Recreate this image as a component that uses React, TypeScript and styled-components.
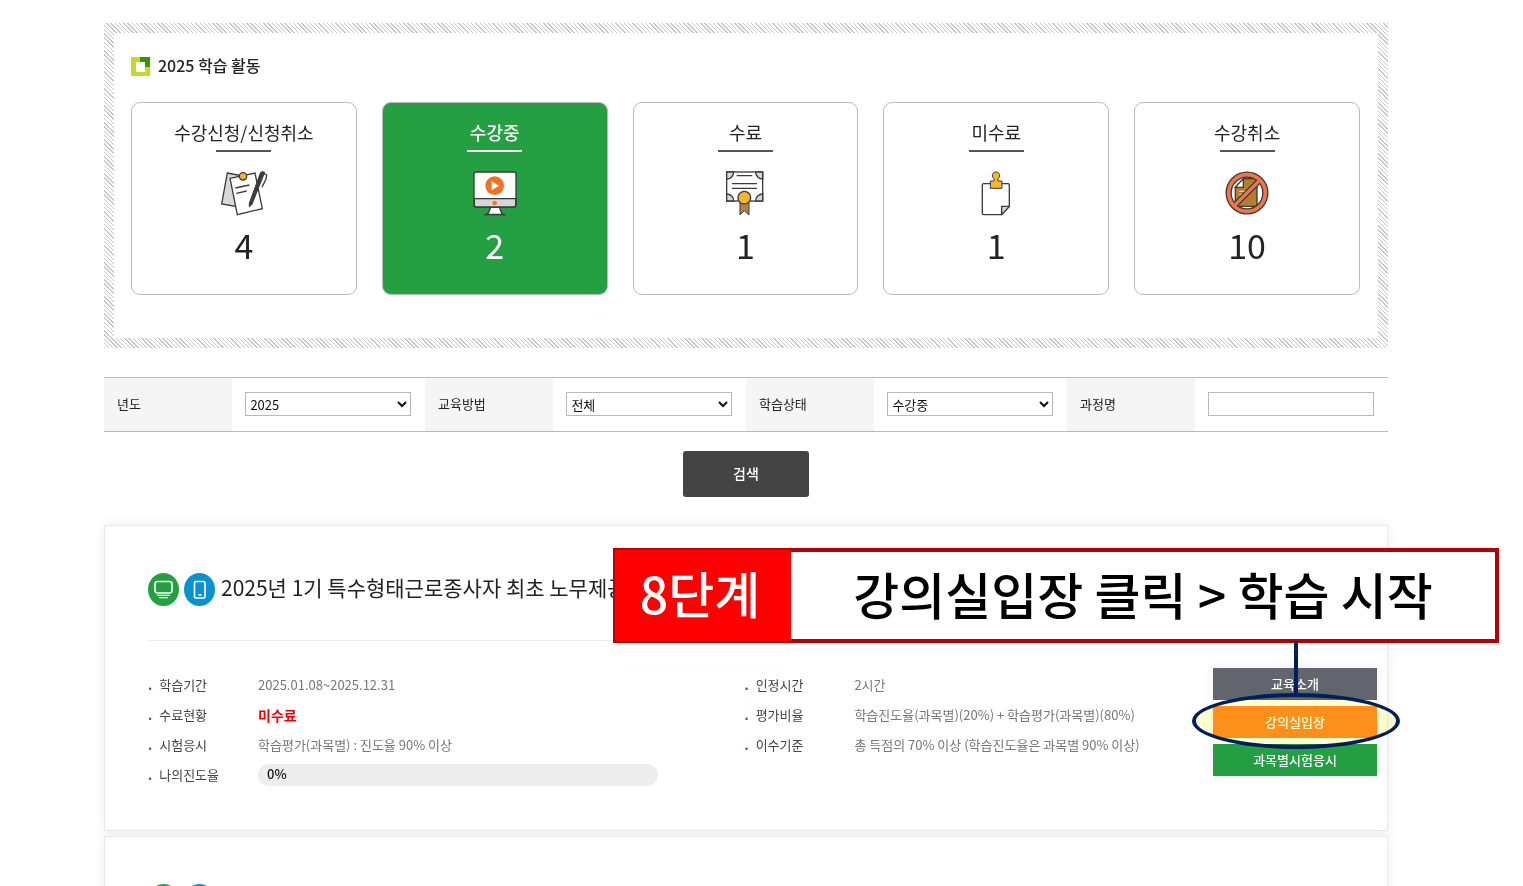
import React from "react";
import styled, { createGlobalStyle, css } from "styled-components";

const GlobalStyle = createGlobalStyle`
  *, *::before, *::after { box-sizing: border-box; }
  body {
    margin: 0;
    background: #fff;
    color: #222;
    font-family: "Noto Sans CJK KR", "Noto Sans", sans-serif;
    font-size: 13px;
    line-height: 20px;
  }
  button, input, select { font-family: inherit; font-size: inherit; }
  h1, h2, dl, dt, dd { margin: 0; font-weight: inherit; }
`;

const Page = styled.main`
  height: 100vh;
  overflow: hidden;
  padding: 23px 135px 0 104px;
`;

const HatchedFrame = styled.section`
  padding: 10px;
  background: repeating-linear-gradient(45deg, #c8c8c8 0 1px, #fff 1px 3px);
`;

const ActivityPanel = styled.div`
  padding: 20px 18px 43px 17px;
  background: #fff;
`;

const PanelHeading = styled.h1`
  display: flex;
  align-items: center;
  gap: 8px;
  height: 26px;
  font-size: 16px;
  font-weight: 500;
  line-height: 24px;
`;

const HeadingText = styled.span`
  padding-bottom: 2px;
`;

const StatusGrid = styled.div`
  display: grid;
  grid-template-columns: repeat(5, minmax(0, 1fr));
  gap: 25px;
  margin-top: 23px;
`;

const StatusCard = styled.button<{ $active?: boolean }>`
  display: flex;
  flex-direction: column;
  align-items: center;
  height: 193px;
  padding: 17px 0 0;
  border: 1px solid #bbb;
  border-radius: 9px;
  background: ${(p) => (p.$active ? "#249f41" : "#fff")};
  color: ${(p) => (p.$active ? "#fff" : "#222")};
  cursor: pointer;
`;

const StatusName = styled.span<{ $active?: boolean }>`
  font-size: 18px;
  font-weight: ${(p) => (p.$active ? 500 : 400)};
  line-height: 24px;
`;

const StatusRule = styled.span<{ $active?: boolean }>`
  width: 55px;
  height: 2px;
  margin: 6px 0 18px;
  background: ${(p) => (p.$active ? "#fff" : "#555")};
`;

const StatusCount = styled.span`
  margin-top: 9px;
  font-size: 34px;
  line-height: 40px;
`;

const StatusIcon = styled.svg`
  width: 46px;
  height: 46px;
  overflow: visible;
`;

const SearchForm = styled.form`
  display: flex;
  flex-direction: column;
  align-items: center;
  margin-top: 29px;
`;

const FilterRow = styled.div`
  display: grid;
  grid-template-columns: repeat(4, minmax(0, 2fr) minmax(0, 3fr));
  width: 100%;
  height: 55px;
  border-top: 1px solid #b9b9b9;
  border-bottom: 1px solid #b9b9b9;
`;

const FilterLabel = styled.label`
  display: flex;
  align-items: center;
  padding: 0 0 2px 13px;
  background: #f5f5f5;
`;

const FilterCell = styled.div`
  display: flex;
  align-items: center;
  padding: 0 14px 1px 13px;
`;

const field = css`
  width: 100%;
  height: 24px;
  border: 1px solid #b9b9b9;
  border-radius: 0;
  background-color: #fff;
  color: #111;
`;

const FilterSelect = styled.select`
  ${field}
  padding: 0;
`;

const FilterInput = styled.input`
  ${field}
  padding: 0 4px;
`;

const SearchButton = styled.button`
  width: 126px;
  height: 46px;
  margin-top: 19px;
  padding: 0 0 3px;
  border: 0;
  border-radius: 3px;
  background: #444;
  color: #fff;
  font-size: 14px;
  font-weight: 500;
  cursor: pointer;
`;

const CourseList = styled.div`
  display: flex;
  flex-direction: column;
  gap: 5px;
  margin-top: 28px;
`;

const CourseCard = styled.article`
  position: relative;
  min-height: 306px;
  padding: 47px 10px 0 43px;
  border: 1px solid #e9e9e9;
  background: #fff;
  box-shadow: 0 0 12px rgba(0, 0, 0, 0.07);
`;

const CourseHeader = styled.header`
  display: flex;
  align-items: flex-start;
  gap: 5px;
  height: 68px;
  border-bottom: 1px solid #ededed;
`;

const DeviceIcon = styled.svg`
  flex: none;
  width: 31px;
  height: 33px;
`;

const CourseTitle = styled.h2`
  padding-left: 1px;
  font-size: 21px;
  line-height: 28px;
`;

const CourseBody = styled.div`
  display: flex;
  align-items: flex-start;
  margin-top: 27px;
`;

const InfoColumns = styled.div`
  flex: 1;
  display: grid;
  grid-template-columns: minmax(0, 56fr) minmax(0, 44fr);
  align-items: start;
  margin-top: 2px;
`;

const InfoList = styled.dl`
  display: grid;
  grid-template-columns: 110px minmax(0, 1fr);
  grid-auto-rows: 30px;
  align-items: center;
`;

const InfoTerm = styled.dt`
  display: flex;
  gap: 7px;
  color: #444;
  &::before {
    content: ".";
    color: #1c7a3a;
    font-weight: 700;
  }
`;

const InfoValue = styled.dd<{ $alert?: boolean }>`
  color: ${(p) => (p.$alert ? "#f00000" : "#777")};
  font-size: ${(p) => (p.$alert ? "14px" : "13px")};
  font-weight: ${(p) => (p.$alert ? 700 : 400)};
`;

const ProgressTrack = styled.div`
  position: relative;
  max-width: 400px;
  height: 22px;
  overflow: hidden;
  border-radius: 11px;
  background: #ededed;
`;

const ProgressFill = styled.div`
  height: 100%;
  background: #249f41;
`;

const ProgressText = styled.span`
  position: absolute;
  inset: 0 auto auto 9px;
  color: #111;
  font-weight: 500;
`;

const Actions = styled.div`
  display: flex;
  flex-direction: column;
  gap: 6px;
  width: 164px;
  box-shadow: 0 0 12px rgba(0, 0, 0, 0.08);
`;

const ActionSlot = styled.div`
  position: relative;
`;

const ActionButton = styled.button<{ $tone: string }>`
  display: block;
  width: 100%;
  height: 32px;
  padding: 0 0 2px;
  border: 0;
  background: ${(p) => p.$tone};
  color: #fff;
  font-weight: 500;
  cursor: pointer;
`;

const ringShape = css`
  position: absolute;
  inset: -13px -23px -11px -21px;
  border-radius: 50%;
  pointer-events: none;
`;

const RingTint = styled.div`
  ${ringShape}
  background: #ffffd2;
  mix-blend-mode: multiply;
`;

const RingOutline = styled.div`
  ${ringShape}
  border: 4px solid #001f5f;
`;

const Connector = styled.div`
  position: absolute;
  left: 50%;
  bottom: 43px;
  width: 4px;
  height: 54px;
  margin-left: -1px;
  background: #001f5f;
  pointer-events: none;
`;

const Callout = styled.aside`
  position: absolute;
  top: 22px;
  left: 508px;
  right: -112px;
  display: flex;
  height: 95px;
  border: 4px solid #b60005;
  background: #fff;
  color: #000;
  font-size: 50px;
  line-height: 82px;
  text-align: center;
  white-space: nowrap;
`;

const CalloutStep = styled.strong`
  width: 176px;
  margin: -2px 0 -2px -2px;
  padding-right: 6px;
  background: #f00;
  color: #fff;
  font-weight: 500;
  line-height: 84px;
`;

const CalloutText = styled.span`
  flex: 1;
  font-weight: 500;
`;

const ink = "#3d3a39";

const ApplyIcon = () => (
  <StatusIcon viewBox="376 466 138 138" fill="none" stroke={ink} strokeWidth="4" aria-hidden="true">
    <path d="M395 475l52 10-18 92-51-9z" fill="#d9d9d9" />
    <path d="M403 491l75-16 22 107-75 18z" fill="#fff" />
    <path d="M419 520l42-9M422 536l31-7" />
    <circle cx="442" cy="485" r="11" fill="#f9b52b" />
    <path d="M495 473q7-4 12 0l-38 96-8 8v-12z" fill={ink} strokeWidth="3" />
    <path d="M504 476l9 5-2 12-12 25" strokeWidth="4" />
  </StatusIcon>
);

const LearningIcon = () => (
  <StatusIcon viewBox="306 226 136 138" fill="none" stroke={ink} strokeWidth="4" aria-hidden="true">
    <path d="M360 337h28q1 14 10 22h-48q9-8 10-22z" fill="#fff" />
    <path d="M341 360h65" />
    <rect x="311" y="232" width="126" height="105" rx="6" fill="#fff" />
    <path d="M312 312h124v19q0 6-6 6H318q-6 0-6-6z" fill="#d6d6d6" />
    <circle cx="373" cy="273" r="28" fill="#f17224" stroke="none" />
    <path d="M364 260v27l22-14z" fill="#fff" stroke="none" />
    <circle cx="373" cy="325" r="7" fill="#f17224" stroke="none" />
  </StatusIcon>
);

const CompleteIcon = () => (
  <StatusIcon viewBox="98 180 138 138" fill="none" stroke={ink} strokeWidth="4" aria-hidden="true">
    <path d="M152 276v39l13-13 14 13v-39z" fill="#b5804a" strokeWidth="3" />
    <rect x="112" y="186" width="108" height="87" fill="#fff" />
    <path d="M112 186h21a21 21 0 0 1-21 21zM220 186h-21a21 21 0 0 0 21 21zM112 273h21a21 21 0 0 0-21-21zM220 273h-21a21 21 0 0 1 21-21z" fill="#d6d6d6" />
    <path d="M142 197h47M128 221h75M128 235h75" />
    <circle cx="165" cy="263" r="19" fill="#f9b52b" />
  </StatusIcon>
);

const IncompleteIcon = () => (
  <StatusIcon viewBox="101 180 138 138" fill="none" stroke={ink} strokeWidth="4" strokeLinejoin="round" aria-hidden="true">
    <path d="M133 221h73q4 0 4 4v64l-23 25h-54q-4 0-4-4v-85q0-4 4-4z" fill="#fff" />
    <path d="M210 289h-23v25z" fill="#d6d6d6" />
    <path d="M153 213h11v-7a11 11 0 1 1 12 0v7h12v22h-35z" fill="#f9b52b" strokeWidth="3" />
  </StatusIcon>
);

const CancelIcon = () => (
  <StatusIcon viewBox="101 182 138 138" fill="none" stroke={ink} strokeWidth="4" aria-hidden="true">
    <circle cx="170" cy="251" r="54" fill="#fff" stroke="none" />
    <path d="M159 208h41v83h-65v-57z" fill="#b57d32" />
    <path d="M159 208v26h-24z" fill="#fff" />
    <path d="M147 246h21M147 256h18M147 267h12" stroke="#f4e4cc" strokeWidth="3" />
    <circle cx="170" cy="251" r="55" stroke={ink} strokeWidth="19" />
    <path d="M209 212l-78 78" stroke={ink} strokeWidth="18" />
    <circle cx="170" cy="251" r="55" stroke="#f1744c" strokeWidth="11" />
    <path d="M210 211l-80 80" stroke="#f1744c" strokeWidth="10" />
  </StatusIcon>
);

const HeadingMark = () => (
  <svg width="19" height="19" viewBox="0 0 19 19" aria-hidden="true">
    <path d="M0 0h19v19H0z" fill="#c3d92c" />
    <path d="M9 0h10v10H9z" fill="#369600" />
    <path d="M5 5h9v10H5z" fill="#fff" />
  </svg>
);

const DesktopBadge = () => (
  <DeviceIcon viewBox="0 0 31 33" preserveAspectRatio="none" role="img" aria-label="PC">
    <ellipse cx="15.5" cy="16.5" rx="15.5" ry="16.5" fill="#249f41" />
    <g fill="none" stroke="#fff" strokeWidth="1.6">
      <rect x="7" y="8.5" width="17" height="11.5" rx="2.5" />
      <path d="M9 22.4h13M11 24.6h9" strokeWidth="1.3" />
    </g>
  </DeviceIcon>
);

const MobileBadge = () => (
  <DeviceIcon viewBox="0 0 31 33" preserveAspectRatio="none" role="img" aria-label="Mobile">
    <ellipse cx="15.5" cy="16.5" rx="15.5" ry="16.5" fill="#0b91cc" />
    <rect x="10.5" y="8.5" width="10.5" height="16.5" rx="1.5" fill="none" stroke="#fff" strokeWidth="1.6" />
    <path d="M14.5 21.8h3" stroke="#fff" strokeWidth="1.6" />
  </DeviceIcon>
);

const statuses = [
  { name: "수강신청/신청취소", count: 4, Icon: ApplyIcon },
  { name: "수강중", count: 2, Icon: LearningIcon, active: true },
  { name: "수료", count: 1, Icon: CompleteIcon },
  { name: "미수료", count: 1, Icon: IncompleteIcon },
  { name: "수강취소", count: 10, Icon: CancelIcon },
];

const filters = [
  { id: "year", label: "년도", value: "2025" },
  { id: "method", label: "교육방법", value: "전체" },
  { id: "state", label: "학습상태", value: "수강중" },
];

const progress = 0;

export default function App() {
  return (
    <Page>
      <GlobalStyle />
      <HatchedFrame>
        <ActivityPanel>
          <PanelHeading>
            <HeadingMark />
            <HeadingText>2025 학습 활동</HeadingText>
          </PanelHeading>
          <StatusGrid>
            {statuses.map(({ name, count, Icon, active }) => (
              <StatusCard key={name} type="button" $active={active}>
                <StatusName $active={active}>{name}</StatusName>
                <StatusRule $active={active} />
                <Icon />
                <StatusCount>{count}</StatusCount>
              </StatusCard>
            ))}
          </StatusGrid>
        </ActivityPanel>
      </HatchedFrame>

      <SearchForm onSubmit={(e) => e.preventDefault()}>
        <FilterRow>
          {filters.map((f) => (
            <React.Fragment key={f.id}>
              <FilterLabel htmlFor={f.id}>{f.label}</FilterLabel>
              <FilterCell>
                <FilterSelect id={f.id} defaultValue={f.value}>
                  <option>{f.value}</option>
                </FilterSelect>
              </FilterCell>
            </React.Fragment>
          ))}
          <FilterLabel htmlFor="course">과정명</FilterLabel>
          <FilterCell>
            <FilterInput id="course" type="text" />
          </FilterCell>
        </FilterRow>
        <SearchButton type="submit">검색</SearchButton>
      </SearchForm>

      <CourseList>
        <CourseCard>
          <CourseHeader>
            <DesktopBadge />
            <MobileBadge />
            <CourseTitle>2025년 1기 특수형태근로종사자 최초 노무제공</CourseTitle>
          </CourseHeader>
          <Callout>
            <CalloutStep>8단계</CalloutStep>
            <CalloutText>강의실입장 클릭 &gt; 학습 시작</CalloutText>
          </Callout>
          <CourseBody>
            <InfoColumns>
              <InfoList>
                <InfoTerm>학습기간</InfoTerm>
                <InfoValue>2025.01.08~2025.12.31</InfoValue>
                <InfoTerm>수료현황</InfoTerm>
                <InfoValue $alert>미수료</InfoValue>
                <InfoTerm>시험응시</InfoTerm>
                <InfoValue>학습평가(과목별) : 진도율 90% 이상</InfoValue>
                <InfoTerm>나의진도율</InfoTerm>
                <InfoValue>
                  <ProgressTrack>
                    <ProgressFill style={{ width: `${progress}%` }} />
                    <ProgressText>{progress}%</ProgressText>
                  </ProgressTrack>
                </InfoValue>
              </InfoList>
              <InfoList>
                <InfoTerm>인정시간</InfoTerm>
                <InfoValue>2시간</InfoValue>
                <InfoTerm>평가비율</InfoTerm>
                <InfoValue>학습진도율(과목별)(20%) + 학습평가(과목별)(80%)</InfoValue>
                <InfoTerm>이수기준</InfoTerm>
                <InfoValue>총 득점의 70% 이상 (학습진도율은 과목별 90% 이상)</InfoValue>
              </InfoList>
            </InfoColumns>
            <Actions>
              <ActionButton type="button" $tone="#62656d">교육소개</ActionButton>
              <ActionSlot>
                <ActionButton type="button" $tone="#ff8f20">강의실입장</ActionButton>
                <RingTint />
                <RingOutline />
                <Connector />
              </ActionSlot>
              <ActionButton type="button" $tone="#249f41">과목별시험응시</ActionButton>
            </Actions>
          </CourseBody>
        </CourseCard>
        <CourseCard>
          <CourseHeader>
            <DesktopBadge />
            <MobileBadge />
          </CourseHeader>
        </CourseCard>
      </CourseList>
    </Page>
  );
}
